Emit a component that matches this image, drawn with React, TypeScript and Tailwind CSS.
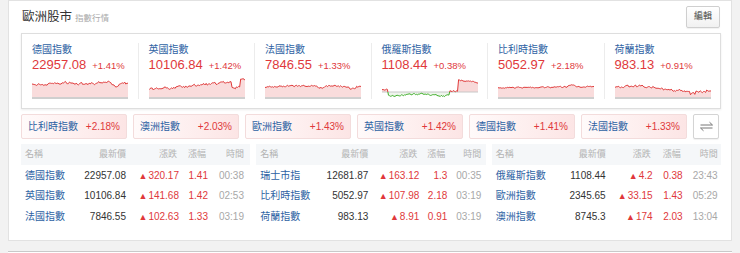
import React from "react";

const FONT = { fontFamily: '"Liberation Sans", "Noto Sans CJK TC", sans-serif' };

function mulberry32(a: number) {
  return function () {
    a |= 0;
    a = (a + 0x6d2b79f5) | 0;
    let t = Math.imul(a ^ (a >>> 15), 1 | a);
    t = (t + Math.imul(t ^ (t >>> 7), 61 | t)) ^ t;
    return ((t ^ (t >>> 14)) >>> 0) / 4294967296;
  };
}

type ChartSpec = {
  seed: number;
  base: (t: number) => number;
  noise: number;
  baseline: number;
  mixed?: boolean;
};

const W = 96;
const H = 22;

const charts: ChartSpec[] = [
  {
    seed: 11,
    base: (t) => 7 - 1.2 * t + Math.sin(t * 14) * 0.8 + (t > 0.83 && t < 0.9 ? 3 : 0),
    noise: 2.6,
    baseline: 20,
  },
  {
    seed: 27,
    base: (t) => (t > 0.95 ? 3 : 13 - 9 * t + (t > 0.86 && t < 0.95 ? 6 : 0)),
    noise: 2.8,
    baseline: 20,
  },
  {
    seed: 5,
    base: (t) => 10 - 1.2 * Math.sin(t * 3.2) + (t > 0.55 && t < 0.62 ? 2 : 0) + (t > 0.88 && t < 0.95 ? 2 : 0),
    noise: 1.6,
    baseline: 20,
  },
  {
    seed: 42,
    base: (t) => {
      if (t < 0.06) return 12.5;
      if (t < 0.7) return 18 + Math.sin(t * 12) * 0.8;
      if (t < 0.79) return 14;
      return 3 + (t - 0.79) * 10;
    },
    noise: 1.6,
    baseline: 15,
    mixed: true,
  },
  {
    seed: 8,
    base: (t) => 11 - 1.5 * t - (t > 0.72 && t < 0.8 ? 1.5 : 0),
    noise: 1.2,
    baseline: 20,
  },
  {
    seed: 63,
    base: (t) => {
      if (t < 0.5) return 11 - 1.8 * Math.sin(t * 6);
      if (t > 0.95) return 13;
      return 13 + 4 * (t - 0.5) + (t > 0.78 && t < 0.84 ? 2.5 : 0);
    },
    noise: 2.2,
    baseline: 20,
  },
];

function Sparkline({ spec, id }: { spec: ChartSpec; id: string }) {
  const r = mulberry32(spec.seed);
  const N = 90;
  const pts: [number, number][] = [];
  let prev = 0;
  for (let i = 0; i < N; i++) {
    const t = i / (N - 1);
    const n = (r() - 0.5) * spec.noise;
    prev = prev * 0.35 + n;
    let y = spec.base(t) + prev;
    if (!spec.mixed) y = Math.max(1, Math.min(spec.baseline - 0.8, y));
    else y = Math.max(1, Math.min(H - 1, y));
    pts.push([t * W, y]);
  }
  const line = pts.map((p, i) => `${i === 0 ? "M" : "L"}${p[0].toFixed(2)},${p[1].toFixed(2)}`).join(" ");
  const area = `${line} L${W},${spec.baseline} L0,${spec.baseline} Z`;
  const bl = spec.baseline;
  return (
    <svg width={W} height={H} viewBox={`0 0 ${W} ${H}`} className="block">
      <defs>
        <clipPath id={`${id}-a`}>
          <rect x={0} y={0} width={W} height={bl} />
        </clipPath>
        <clipPath id={`${id}-b`}>
          <rect x={0} y={bl} width={W} height={H - bl} />
        </clipPath>
      </defs>
      {spec.mixed ? (
        <>
          <path d={area} fill="#f8d9d9" clipPath={`url(#${id}-a)`} />
          <path d={area} fill="#eef5ec" clipPath={`url(#${id}-b)`} />
          <rect x={0} y={bl - 0.5} width={W} height={1} fill="#c8c8c8" />
          <path d={line} fill="none" stroke="#e03a3a" strokeWidth={1} clipPath={`url(#${id}-a)`} />
          <path d={line} fill="none" stroke="#3fae2a" strokeWidth={1} clipPath={`url(#${id}-b)`} />
        </>
      ) : (
        <>
          <path d={area} fill="#f9dcdc" />
          <rect x={0} y={bl} width={W} height={H - bl} fill="#cfcfcf" />
          <path d={line} fill="none" stroke="#e03a3a" strokeWidth={1} />
        </>
      )}
    </svg>
  );
}

const cards = [
  { name: "德國指數", value: "22957.08", pct: "+1.41%" },
  { name: "英國指數", value: "10106.84", pct: "+1.42%" },
  { name: "法國指數", value: "7846.55", pct: "+1.33%" },
  { name: "俄羅斯指數", value: "1108.44", pct: "+0.38%" },
  { name: "比利時指數", value: "5052.97", pct: "+2.18%" },
  { name: "荷蘭指數", value: "983.13", pct: "+0.91%" },
];

const tickers = [
  { name: "比利時指數", pct: "+2.18%" },
  { name: "澳洲指數", pct: "+2.03%" },
  { name: "歐洲指數", pct: "+1.43%" },
  { name: "英國指數", pct: "+1.42%" },
  { name: "德國指數", pct: "+1.41%" },
  { name: "法國指數", pct: "+1.33%" },
];

type Row = [string, string, string, string, string];

const tables: { cols: string[]; rows: Row[] }[] = [
  {
    cols: ["w-[58px]", "w-[43px]", "w-[53px]", "w-[29px]", "w-[36px]"],
    rows: [
      ["德國指數", "22957.08", "320.17", "1.41", "00:38"],
      ["英國指數", "10106.84", "141.68", "1.42", "02:53"],
      ["法國指數", "7846.55", "102.63", "1.33", "03:19"],
    ],
  },
  {
    cols: ["w-[62px]", "w-[46px]", "w-[51px]", "w-[28px]", "w-[34px]"],
    rows: [
      ["瑞士市指", "12681.87", "163.12", "1.3", "00:35"],
      ["比利時指數", "5052.97", "107.98", "2.18", "03:19"],
      ["荷蘭指數", "983.13", "8.91", "0.91", "03:19"],
    ],
  },
  {
    cols: ["w-[64px]", "w-[46px]", "w-[47px]", "w-[30px]", "w-[35px]"],
    rows: [
      ["俄羅斯指數", "1108.44", "4.2", "0.38", "23:43"],
      ["歐洲指數", "2345.65", "33.15", "1.43", "05:29"],
      ["澳洲指數", "8745.3", "174", "2.03", "13:04"],
    ],
  },
];

function Table({ cols, rows }: { cols: string[]; rows: Row[] }) {
  return (
    <div className="flex flex-col">
      <div className="flex h-[21px] items-center bg-[#f5f7f9] pl-[4px] text-[9px] text-[#b3b3b3]">
        <div className={`${cols[0]} shrink-0`}>名稱</div>
        <div className={`${cols[1]} shrink-0 text-right`}>最新價</div>
        <div className={`${cols[2]} shrink-0 text-right pr-[2px]`}>漲跌</div>
        <div className={`${cols[3]} shrink-0 text-right pr-[2px]`}>漲幅</div>
        <div className={`${cols[4]} shrink-0 text-right`}>時間</div>
      </div>
      {rows.map((r, i) => (
        <div key={i} className="flex h-[20.5px] items-center pl-[4px] text-[10px] whitespace-nowrap">
          <div className={`${cols[0]} shrink-0 text-[#2d62a3]`}>{r[0]}</div>
          <div className={`${cols[1]} shrink-0 text-right text-[#333]`}>{r[1]}</div>
          <div className={`${cols[2]} shrink-0 text-right text-[#e0383b]`}>
            <span className="mr-[1px] text-[9px]">▲</span>
            {r[2]}
          </div>
          <div className={`${cols[3]} shrink-0 text-right text-[#e0383b]`}>{r[3]}</div>
          <div className={`${cols[4]} shrink-0 text-right text-[#a8a8a8]`}>{r[4]}</div>
        </div>
      ))}
    </div>
  );
}

export default function App() {
  return (
    <div className="h-[253px] w-[740px] overflow-hidden bg-[#f2f2f2] px-[8px]" style={FONT}>
      <div className="h-[241px] border border-[#e2e2e2] bg-white pl-[12px] pr-[10px]">
        <div className="flex h-[32px] items-center justify-between">
          <div className="flex items-baseline pl-[1px]">
            <span className="text-[12.5px] text-[#333]">歐洲股市</span>
            <span className="ml-[3px] text-[8.5px] text-[#aaa]">指數行情</span>
          </div>
          <button className="mr-[1px] h-[22px] w-[34px] rounded-[2px] border border-[#cfcfcf] bg-gradient-to-b from-white to-[#f1f1f1] text-[9px] text-[#444] shadow-[0_1px_1px_rgba(0,0,0,0.06)]">
            編輯
          </button>
        </div>

        <div className="flex h-[76px] border border-[#dedede] shadow-[0_1px_2px_rgba(0,0,0,0.08)]">
          {cards.map((c, i) => (
            <React.Fragment key={c.name}>
              {i > 0 && <div className="my-[9px] w-px bg-[#ececec]" />}
              <div className="flex-1 pl-[10px] pt-[9px]">
                <div className="h-[14px] text-[10px] leading-[14px] text-[#2d62a3]">{c.name}</div>
                <div className="flex h-[16px] items-baseline gap-[6px] leading-[16px] text-[#e0383b]">
                  <span className="text-[13px]">{c.value}</span>
                  <span className="text-[9.5px]">{c.pct}</span>
                </div>
                <div className="mt-[4px]">
                  <Sparkline spec={charts[i]} id={`sp${i}`} />
                </div>
              </div>
            </React.Fragment>
          ))}
        </div>

        <div className="mt-[5px] flex h-[25px] gap-[6px]">
          {tickers.map((t) => (
            <div
              key={t.name}
              className="flex w-[106px] items-center justify-between rounded-[2px] border border-[#f3dcdc] bg-gradient-to-r from-[#fffafa] to-[#fce5e5] px-[6px] text-[10px]"
            >
              <span className="text-[#2d62a3]">{t.name}</span>
              <span className="text-[#e0383b]">{t.pct}</span>
            </div>
          ))}
          <div className="flex w-[26px] items-center justify-center rounded-[2px] border border-[#d4d4d4] bg-white shadow-[0_1px_1px_rgba(0,0,0,0.06)]">
            <svg width="13" height="11" viewBox="0 0 13 11" fill="none" stroke="#777" strokeWidth="1">
              <path d="M0.5 4 H12.5 L9.5 1.2" />
              <path d="M12.5 7 H0.5 L3.5 9.8" />
            </svg>
          </div>
        </div>

        <div className="mt-[5px] grid grid-cols-3 gap-[6px]">
          {tables.map((t, i) => (
            <Table key={i} cols={t.cols} rows={t.rows} />
          ))}
        </div>
      </div>
      <div className="mt-[10px] h-[20px] border-t border-[#c9c9c9] bg-white" />
    </div>
  );
}
